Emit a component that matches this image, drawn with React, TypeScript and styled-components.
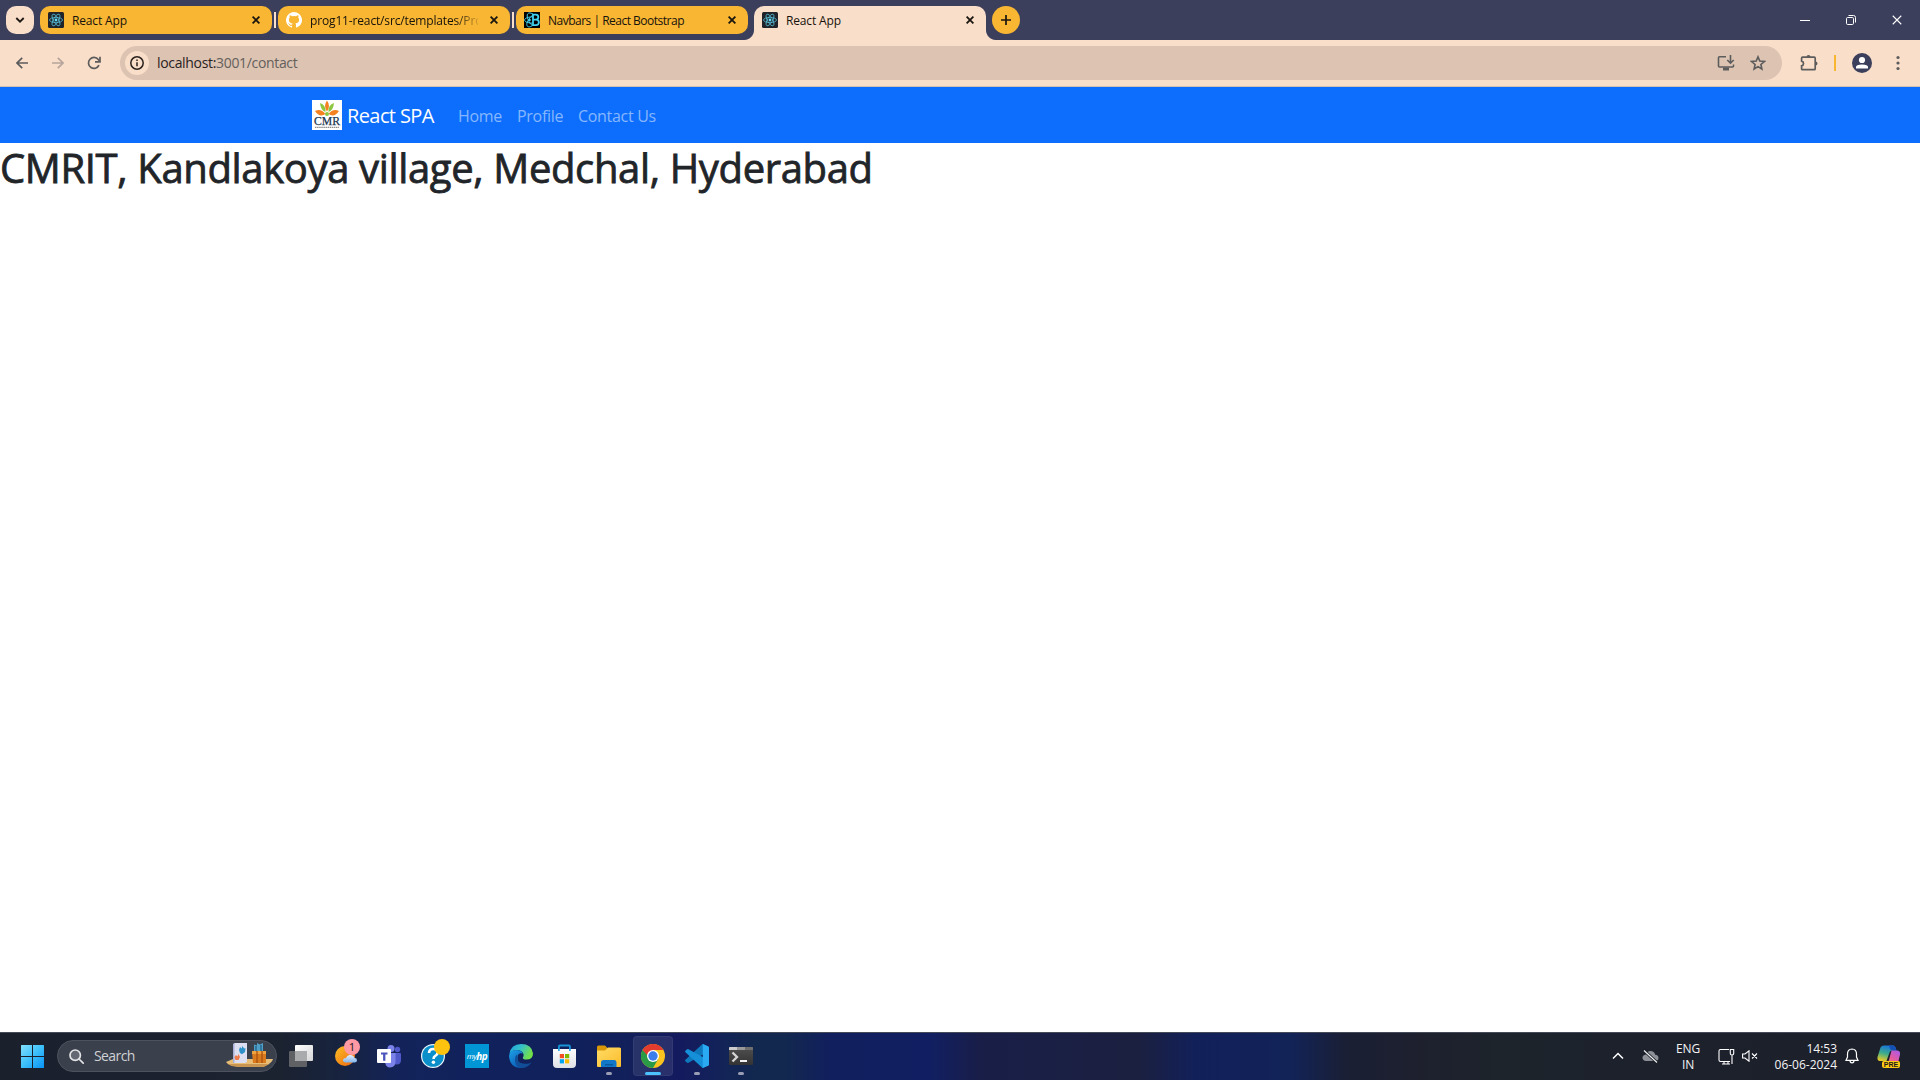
import React from "react";
import styled, { createGlobalStyle } from "styled-components";

const Global = createGlobalStyle`
  * { box-sizing: border-box; }
  body {
    margin: 0;
    background: #fff;
    font-family: "Open Sans", "Noto Sans", sans-serif;
    overflow: hidden;
  }
  svg { display: block; flex: none; }
`;

const Desktop = styled.div`
  width: 1920px;
  height: 1080px;
  display: flex;
  flex-direction: column;
  overflow: hidden;
`;

/* ---------- browser tab strip ---------- */

const TabStrip = styled.div`
  height: 40px;
  flex: none;
  display: flex;
  padding: 6px 0 0 6px;
  background: #3c3f5b;
`;

const TabSearch = styled.div`
  width: 28px;
  height: 28px;
  margin-right: 6px;
  border-radius: 10px;
  background: #f9dec9;
  display: grid;
  place-items: center;
`;

const TabBox = styled.div<{ $active?: boolean }>`
  position: relative;
  width: 232px;
  height: ${(p) => (p.$active ? 34 : 28)}px;
  padding: 0 0 ${(p) => (p.$active ? 6 : 0)}px 8px;
  display: flex;
  align-items: center;
  border-radius: ${(p) => (p.$active ? "10px 10px 0 0" : "10px")};
  background: ${(p) => (p.$active ? "#f9dec9" : "#f8b633")};
  &::before,
  &::after {
    content: "";
    display: ${(p) => (p.$active ? "block" : "none")};
    position: absolute;
    bottom: 0;
    width: 10px;
    height: 10px;
  }
  &::before {
    left: -10px;
    background: radial-gradient(circle at 0 0, transparent 9.5px, #f9dec9 10.5px);
  }
  &::after {
    right: -10px;
    background: radial-gradient(circle at 100% 0, transparent 9.5px, #f9dec9 10.5px);
  }
`;

const TabTitle = styled.div<{ $spacing?: number; $fade?: boolean }>`
  width: 168px;
  flex: none;
  margin-left: 8px;
  padding-top: 2px;
  white-space: nowrap;
  font-size: 12px;
  line-height: 18px;
  color: #16120c;
  letter-spacing: ${(p) => p.$spacing ?? 0}px;
  mask-image: ${(p) => (p.$fade ? "linear-gradient(90deg, #000 145px, transparent 172px)" : "none")};
`;

const TabGap = styled.div<{ $line?: boolean }>`
  width: 6px;
  height: 28px;
  display: grid;
  place-items: center;
  &::after {
    content: "";
    width: 2px;
    height: 16px;
    background: ${(p) => (p.$line ? "#f9dec9" : "transparent")};
  }
`;

const NewTab = styled.div`
  width: 28px;
  height: 28px;
  border-radius: 50%;
  background: #f8b633;
  display: grid;
  place-items: center;
`;

const WindowButtons = styled.div`
  margin: -6px 0 0 auto;
  height: 40px;
  display: flex;
`;

const WindowButton = styled.div`
  width: 46px;
  display: grid;
  place-items: center;
`;

/* ---------- browser toolbar ---------- */

const Toolbar = styled.div`
  height: 47px;
  flex: none;
  display: flex;
  align-items: center;
  padding: 0 4px 1px 4px;
  background: #f9dec9;
  border-bottom: 1px solid #d3bfb4;
`;

const ToolSlot = styled.div<{ $w?: number }>`
  width: ${(p) => p.$w ?? 36}px;
  height: 34px;
  flex: none;
  display: grid;
  place-items: center;
`;

const Omnibox = styled.div`
  flex: 1;
  height: 34px;
  margin: 0 9px 0 8px;
  padding: 0 8px 0 5px;
  display: flex;
  align-items: center;
  border-radius: 17px;
  background: #dcc3b2;
`;

const SiteInfo = styled.div`
  width: 24px;
  height: 24px;
  border-radius: 50%;
  background: #f9dec9;
  display: grid;
  place-items: center;
`;

const Url = styled.div`
  flex: 1;
  margin-left: 8px;
  font-size: 14px;
  line-height: 20px;
  color: #655f5c;
  letter-spacing: -0.33px;
`;

const Host = styled.span`
  color: #29221f;
`;

const Divider = styled.div`
  width: 2px;
  height: 16px;
  margin: 0 8px 0 7px;
  background: #f8b633;
`;

/* ---------- page ---------- */

const Page = styled.main`
  flex: 1;
  background: #fff;
`;

const Navbar = styled.nav`
  height: 56px;
  background: #0d6efd;
`;

const Container = styled.div`
  width: 1320px;
  height: 100%;
  margin: 0 auto;
  padding: 0 12px;
  display: flex;
  align-items: center;
`;

const Brand = styled.a`
  width: 87px;
  margin: 0 16px 0 5px;
  padding-top: 1px;
  color: #fff;
  font-size: 20px;
  line-height: 30px;
  white-space: nowrap;
  letter-spacing: -0.6px;
`;

const NavLink = styled.a<{ $w: number }>`
  width: ${(p) => p.$w}px;
  padding: 1px 8px 0;
  color: #86b7fe;
  font-size: 16px;
  line-height: 24px;
  white-space: nowrap;
  letter-spacing: -0.3px;
`;

const Heading = styled.h1`
  margin: 0;
  padding-top: 1px;
  font-size: 40px;
  font-weight: 500;
  line-height: 48px;
  color: #212529;
  white-space: nowrap;
  letter-spacing: -0.36px;
  -webkit-text-stroke: 0.8px #212529;
`;

/* ---------- taskbar ---------- */

const Taskbar = styled.footer`
  height: 48px;
  flex: none;
  display: flex;
  align-items: center;
  padding: 0 9px 1px 21px;
  border-top: 1px solid #454b59;
  background: linear-gradient(
    90deg,
    #1b202d 0, #1b2230 280px, #17233f 340px, #13235a 400px, #10215c 500px, #11205a 620px,
    #141a5e 680px, #13225a 715px, #12284e 755px, #12284e 785px, #111f5e 830px, #111f62 930px,
    #191e48 980px, #1b2040 1140px, #12205a 1195px, #122358 1290px, #1a1f35 1345px,
    #1e202e 1420px, #1d242b 1500px, #1c212c 1620px, #1b202b 1920px
  );
`;

const SearchPill = styled.div`
  width: 220px;
  height: 32px;
  margin: 0 2px 0 12px;
  padding: 0 3px 0 11px;
  display: flex;
  align-items: center;
  border-radius: 16px;
  border: 1px solid #4d525e;
  background: #3a404c;
`;

const SearchLabel = styled.div`
  flex: 1;
  margin-left: 10px;
  font-size: 14px;
  line-height: 20px;
  color: #cfd1d4;
  letter-spacing: -0.6px;
`;

const AppSlot = styled.div<{ $state?: "open" | "active" }>`
  position: relative;
  width: 40px;
  height: 40px;
  margin: 0 2px;
  display: grid;
  place-items: center;
  border-radius: 4px;
  background: ${(p) => (p.$state === "active" ? "rgba(255,255,255,0.09)" : "transparent")};
  box-shadow: ${(p) => (p.$state === "active" ? "inset 0 0 0 1px rgba(255,255,255,0.05)" : "none")};
  &::after {
    content: "";
    display: ${(p) => (p.$state ? "block" : "none")};
    position: absolute;
    bottom: 1px;
    left: ${(p) => (p.$state === "active" ? 12 : 17)}px;
    width: ${(p) => (p.$state === "active" ? 16 : 6)}px;
    height: 3px;
    border-radius: 2px;
    background: ${(p) => (p.$state === "active" ? "#4cc2ff" : "#9a9db4")};
  }
`;

const Badge = styled.div<{ $color: string; $right: number }>`
  position: absolute;
  top: 3px;
  right: ${(p) => p.$right}px;
  width: 16px;
  height: 16px;
  border-radius: 50%;
  background: ${(p) => p.$color};
  color: #1a1a1a;
  font-size: 11.5px;
  line-height: 16px;
  text-align: center;
`;

const MyHp = styled.div`
  width: 24px;
  height: 24px;
  background: #0096d6;
  color: #fff;
  display: flex;
  justify-content: center;
  align-items: center;
  font-size: 8px;
  line-height: 12px;
  font-style: italic;
  letter-spacing: -0.6px;
`;

const HpMark = styled.b`
  font-size: 10px;
`;

const Tray = styled.div`
  margin-left: auto;
  display: flex;
  align-items: center;
  height: 100%;
`;

const TraySlot = styled.div<{ $w: number }>`
  width: ${(p) => p.$w}px;
  display: flex;
  justify-content: center;
  align-items: center;
`;

const TrayText = styled.div<{ $w: number; $align: string; $spacing: number }>`
  width: ${(p) => p.$w}px;
  padding-top: 1px;
  color: #f4f4f5;
  font-size: 12px;
  line-height: 16px;
  text-align: ${(p) => p.$align};
  letter-spacing: ${(p) => p.$spacing}px;
  white-space: pre-line;
`;

const CopilotWrap = styled.div`
  position: relative;
  width: 24px;
  height: 24px;
`;

const PreTag = styled.div`
  position: absolute;
  left: 5px;
  bottom: 0;
  width: 18px;
  height: 7px;
  border-radius: 2px;
  background: #ffc915;
  color: #1b1b1b;
  font-family: "Liberation Sans", sans-serif;
  font-size: 7px;
  font-weight: 700;
  line-height: 7px;
  text-align: center;
`;

/* ---------- drawings ---------- */

const CloseX = ({ size = 8, color = "#1a150e", w = 1.8 }: { size?: number; color?: string; w?: number }) => (
  <svg width={size} height={size} viewBox="0 0 8 8" stroke={color} strokeWidth={w} fill="none">
    <path d="M.6.6l6.8 6.8M7.4.6L.6 7.4" />
  </svg>
);

const ReactIcon = () => (
  <svg width="16" height="16" viewBox="0 0 16 16">
    <rect width="16" height="16" rx="1.5" fill="#20232a" />
    <g fill="none" stroke="#53b9d2" strokeWidth=".8">
      <ellipse cx="8" cy="8" rx="6.5" ry="2.6" />
      <ellipse cx="8" cy="8" rx="6.5" ry="2.6" transform="rotate(60 8 8)" />
      <ellipse cx="8" cy="8" rx="6.5" ry="2.6" transform="rotate(120 8 8)" />
    </g>
    <circle cx="8" cy="8" r="1.4" fill="#61dafb" />
  </svg>
);

const GithubIcon = () => (
  <svg width="16" height="16" viewBox="0 0 16 16" fill="#fff">
    <path d="M8 0a8 8 0 00-2.53 15.59c.4.07.55-.17.55-.38v-1.34c-2.23.48-2.7-1.07-2.7-1.07-.36-.93-.89-1.17-.89-1.17-.73-.5.05-.49.05-.49.8.06 1.23.83 1.23.83.72 1.22 1.88.87 2.34.66.07-.52.28-.87.5-1.07-1.77-.2-3.64-.89-3.64-3.95 0-.87.31-1.59.83-2.15-.08-.2-.36-1.01.07-2.12 0 0 .68-.21 2.2.82a7.6 7.6 0 014 0c1.53-1.04 2.2-.82 2.2-.82.44 1.1.16 1.92.08 2.12.51.56.82 1.27.82 2.15 0 3.07-1.87 3.75-3.65 3.95.29.25.54.73.54 1.48v2.17c0 .21.15.46.55.38A8 8 0 008 0z" />
  </svg>
);

const BootstrapIcon = () => (
  <svg width="16" height="16" viewBox="0 0 16 16">
    <rect width="16" height="16" fill="#000" />
    <g fill="none" stroke="#41d0ee" strokeWidth="1">
      <path d="M9 2.600h2.800a2.400 2.400 0 010 5H9zM9 7.600h3.100a2.700 2.700 0 010 5.500H9z" strokeWidth="1.800" />
      <path d="M9 4.800C5 4.800.6 6 .6 8s3.400 3 8 3.200" />
      <path d="M9 2.200C6.500.2 3 .4 3.200 4S6 12.500 9 14" />
      <path d="M9 3C6.500 4.500 2.600 9.500 2.800 12.500S6 15.800 9 13" />
    </g>
    <circle cx="5.600" cy="8" r="1.200" fill="#41d0ee" />
  </svg>
);

const CmrLogo = () => (
  <svg width="30" height="30" viewBox="0 0 30 30">
    <rect width="30" height="30" fill="#fff" />
    <path d="M15 .5q4 5.500 0 11q-4-5.500 0-11z" fill="#f58220" />
    <path d="M8 3q6 2 5.500 9q-5-2-5.500-9zM22 3q-6 2-5.500 9q5-2 5.500-9z" fill="#8dc63f" />
    <path d="M3 11q6-3 10.500 3q-6 4-10.500-3zM27 11q-6-3-10.500 3q6 4 10.500-3z" fill="#f58220" />
    <circle cx="15" cy="14" r="2" fill="#8dc63f" />
    <text x="15" y="25" textAnchor="middle" fontFamily="Liberation Serif, serif" fontSize="12.500" textLength="26" lengthAdjust="spacingAndGlyphs" fill="#1c3550" stroke="#1c3550" strokeWidth=".25">CMR</text>
    <path d="M3 27.300h24" stroke="#8b8b8b" strokeWidth="1.200" strokeDasharray="1.500 .6" />
  </svg>
);

const SearchArt = () => (
  <svg width="47" height="26" viewBox="0 0 47 26">
    <path d="M0 19l7-3h40q-1 4-8 7H9q-6 0-9-4z" fill="#e8bd78" />
    <path d="M2 21q4 3 9 3h27l5-3z" fill="#c99652" />
    <path d="M7 1l2-1h12v19l-2 1H7z" fill="#dcdff2" />
    <path d="M7 1h1.500v19H7z" fill="#aab0d8" />
    <path d="M13 7l1-3 1.500 1.500 1-2.500 1.500 2.500 1.500-.5-.5 4-3 2.200-2-1.200z" fill="#2f91c9" />
    <path d="M8.500 14l1.500-2 1.500 1.500 1-2.500 1.500 3-1.500 3h-3z" fill="#ef7b4b" />
    <path d="M28 8V1.500l3 1V0l3 1.500L37 0v8z" fill="#4f9fc8" />
    <path d="M30 3v5M35 2v6" stroke="#28698e" strokeWidth="1.500" />
    <path d="M26 9h14v11H27z" fill="#d97a1d" />
    <path d="M26 8h14v3H26z" fill="#efa23e" />
    <path d="M31 8v12M36 8v12" stroke="#a8500f" strokeWidth="1.300" />
  </svg>
);

const TaskView = () => (
  <svg width="24" height="24" viewBox="0 0 24 24">
    <defs><linearGradient id="tv" x1="0" y1="0" x2="1" y2="1"><stop stopColor="#fff" /><stop offset="1" stopColor="#d6d6d6" /></linearGradient></defs>
    <rect y="7" width="18" height="16" rx="1" fill="#5f6164" />
    <rect x="6" y="1" width="18" height="16" rx="1" fill="url(#tv)" />
    <path d="M6 7h12v10H7a1 1 0 01-1-1z" fill="#a9abad" />
  </svg>
);

const Weather = () => (
  <svg width="24" height="24" viewBox="0 0 24 24">
    <defs>
      <linearGradient id="sun" x1="0" y1="0" x2="1" y2="1"><stop stopColor="#fbbf24" /><stop offset="1" stopColor="#ee6612" /></linearGradient>
      <linearGradient id="cl" x1="0" y1="0" x2="0" y2="1"><stop stopColor="#e5f0fd" /><stop offset="1" stopColor="#83b4ec" /></linearGradient>
    </defs>
    <circle cx="12" cy="12" r="10" fill="url(#sun)" />
    <path d="M12.500 18.500q-3-.5-2.500-2.700Q10.500 14 13 14q1.500-3.500 5-3 3 .5 3.500 3 2.500 0 2.500 2.300 0 2.200-2.500 2.200z" fill="url(#cl)" />
  </svg>
);

const Teams = () => (
  <svg width="24" height="24" viewBox="0 0 24 24">
    <circle cx="20.500" cy="5.500" r="2.700" fill="#5059c9" />
    <path d="M16 9h7a1 1 0 011 1v6q0 4.500-4.500 4.500T16 17z" fill="#5059c9" />
    <circle cx="14" cy="4.500" r="3.500" fill="#7b83eb" />
    <path d="M8 9h10.500v8q0 6.500-5.500 6.500-4 0-5-5z" fill="#7b83eb" />
    <rect y="5" width="14" height="14" rx="1" fill="#fff" />
    <path d="M4 8.500h6.500v2h-2.100v6.300H6.100v-6.300H4z" fill="#4b53bc" />
  </svg>
);

const HelpIcon = () => (
  <svg width="24" height="24" viewBox="0 0 24 24">
    <circle cx="12" cy="12" r="12" fill="#e9f5fb" />
    <circle cx="12" cy="12" r="10.800" fill="#0b8fca" />
    <path d="M8 9q.2-4 4.200-4 4.300 0 4.300 3.700 0 2-2.200 3.200-1.800 1-1.800 3" fill="none" stroke="#fff" strokeWidth="2.600" />
    <circle cx="12.400" cy="18.200" r="1.700" fill="#fff" />
  </svg>
);

const Edge = () => (
  <svg width="24" height="24" viewBox="0 0 24 24">
    <defs>
      <linearGradient id="e1" x1="0" y1="0" x2="1" y2=".4"><stop stopColor="#1d9fe0" /><stop offset=".5" stopColor="#35c1c8" /><stop offset="1" stopColor="#72e04a" /></linearGradient>
      <linearGradient id="e2" x1="0" y1="0" x2=".6" y2="1"><stop stopColor="#1da1e8" /><stop offset="1" stopColor="#0b5cb5" /></linearGradient>
    </defs>
    <path d="M.4 10Q2 0 12 0q11 0 12 9.500 0 6-6.500 6-4 0-3.600-2 1-1.500.6-3.500Q13 6 7.500 6 3 6 .4 10z" fill="url(#e1)" />
    <path d="M0 12Q.5 6 7 6q5.500 0 7 3.500-5-1.500-5.500 3.500-.3 6 5 9.500L12 24Q1 24 0 12z" fill="url(#e2)" />
    <path d="M8.500 10.300Q6 20 17 19.700q3 0 5.500-1.500Q19 24 12.500 24 7 23 6 17q-.5-5 2.500-6.700z" fill="#124e98" />
  </svg>
);

const Store = () => (
  <svg width="24" height="24" viewBox="0 0 24 24">
    <defs><linearGradient id="st" x1="0" y1="0" x2="0" y2="1"><stop stopColor="#fdfdfe" /><stop offset="1" stopColor="#dfe1e5" /></linearGradient></defs>
    <path d="M5.900 7V2.500q0-1 1-1h9q1 0 1 1V7" fill="none" stroke="#1793d8" strokeWidth="1.800" />
    <path d="M0 5h23v15q0 4-4 4H4q-4 0-4-4z" fill="url(#st)" />
    <path d="M5 5v2h1.800V5zM16 5v2h1.800V5z" fill="#30abea" />
    <path d="M6.800 10H11v4.200H6.800z" fill="#f25022" /><path d="M12 10h4.200v4.200H12z" fill="#7fba00" />
    <path d="M6.800 15.200H11v4.200H6.800z" fill="#00a4ef" /><path d="M12 15.200h4.200v4.200H12z" fill="#ffb900" />
  </svg>
);

const Explorer = () => (
  <svg width="24" height="24" viewBox="0 0 24 24">
    <defs><linearGradient id="fo" x1="0" y1="0" x2="1" y2="1"><stop stopColor="#ffdc66" /><stop offset="1" stopColor="#fcbc2b" /></linearGradient></defs>
    <path d="M0 3q0-1.500 1.500-1.500H8l2.500 2.500H22.500Q24 4 24 5v5H0z" fill="#d99708" />
    <path d="M0 6.500h8L11 3.500h11.500Q24 3.500 24 5V22q0 1-1 1H1q-1 0-1-1z" fill="url(#fo)" />
    <path d="M4 23v-4.500Q4 16 6.500 16h11q2 0 2 2.500V23z" fill="#1277c9" />
    <path d="M8 20h8v1.500H8z" fill="#0a5aa0" />
  </svg>
);

const Chrome = () => (
  <svg width="24" height="24" viewBox="0 0 24 24">
    <circle cx="12" cy="12" r="12" fill="#fcc31e" />
    <path d="M12 12L1.600 6A12 12 0 0012 24l5.200-9z" fill="#2a9a47" />
    <path d="M12 12H6.800L1.600 6A12 12 0 0122.400 6H12z" fill="#e33b2e" />
    <circle cx="12" cy="12" r="6" fill="#fff" />
    <circle cx="12" cy="12" r="4.700" fill="#3b7ded" />
  </svg>
);

const VsCode = () => (
  <svg width="24" height="24" viewBox="0 0 24 24">
    <path d="M17.500 0L24 3v4L3.500 18.800q-1 .5-1.700-.2L.4 17.300q-.7-.8 0-1.500z" fill="#0e78bd" />
    <path d="M17.500 24l6.500-3v-4.500L3.500 5.200q-1-.5-1.700.2L.4 6.700q-.7.8 0 1.500z" fill="#1590d8" />
    <path d="M17.800 0L23 2.300q1 .5 1 1.500v16.400q0 1-1 1.500L17.800 24z" fill="#2aaaf2" />
  </svg>
);

const Terminal = () => (
  <svg width="24" height="24" viewBox="0 0 24 24">
    <defs><linearGradient id="te" x1="0" y1="0" x2="0" y2="1"><stop stopColor="#505050" /><stop offset="1" stopColor="#333" /></linearGradient></defs>
    <rect y="3" width="24" height="18" rx="1" fill="url(#te)" />
    <path d="M1 3h7v3H0V4q0-1 1-1z" fill="#ccc" /><path d="M8 3h8v3H8z" fill="#999" /><path d="M16 3h7q1 0 1 1v2h-8z" fill="#6f6f6f" />
    <path d="M3.500 8.500L8 13l-4.500 4.500" fill="none" stroke="#d5d5d5" strokeWidth="2.300" />
    <path d="M11 16h7v2h-7z" fill="#f1f1f1" />
  </svg>
);

const Copilot = () => (
  <svg width="24" height="24" viewBox="0 0 24 24">
    <defs>
      <linearGradient id="c1" x1=".5" y1="0" x2=".2" y2="1"><stop stopColor="#1976dc" /><stop offset=".5" stopColor="#3cab8b" /><stop offset="1" stopColor="#f2cc20" /></linearGradient>
      <linearGradient id="c2" x1="1" y1="0" x2=".2" y2="1"><stop stopColor="#a659ee" /><stop offset=".6" stopColor="#e55aa0" /><stop offset="1" stopColor="#f78654" /></linearGradient>
    </defs>
    <path d="M7 1.500h9q2 0 2.500 2L19.500 6.500H15q-2 0-2.500 2L9.500 17H3q-3 0-2.500-4L3.500 3.500Q4.500 1.500 7 1.500z" fill="url(#c1)" />
    <path d="M12 1.500h4q2 0 2.500 2l1 3H15q-2-.3-3-5z" fill="#1651b6" />
    <path d="M14.500 6.500H20q3.500.2 3 4l-2 8.500q-.5 1-3.500 1H8q3-.5 4-4z" fill="url(#c2)" />
  </svg>
);

const tabs = [
  { title: "React App", icon: <ReactIcon />, spacing: -0.15 },
  { title: "prog11-react/src/templates/Pro", icon: <GithubIcon />, spacing: -0.15, fade: true },
  { title: "Navbars | React Bootstrap", icon: <BootstrapIcon />, spacing: -0.5 },
  { title: "React App", icon: <ReactIcon />, spacing: -0.15, active: true },
];

const apps: { icon: React.ReactNode; state?: "open" | "active"; badge?: string; right?: number; label?: string }[] = [
  { icon: <TaskView /> },
  { icon: <Weather />, badge: "#ff99a4", right: 5, label: "1" },
  { icon: <Teams /> },
  { icon: <HelpIcon />, badge: "#ffc20e", right: 3 },
  { icon: <MyHp>my<HpMark>hp</HpMark></MyHp> },
  { icon: <Edge /> },
  { icon: <Store /> },
  { icon: <Explorer />, state: "open" },
  { icon: <Chrome />, state: "active" },
  { icon: <VsCode />, state: "open" },
  { icon: <Terminal />, state: "open" },
];

export default function App() {
  return (
    <Desktop>
      <Global />
      <TabStrip>
        <TabSearch>
          <svg width="10" height="6" viewBox="0 0 10 6" fill="none" stroke="#201a17" strokeWidth="1.900"><path d="M1.300 1L5 4.600 8.700 1" /></svg>
        </TabSearch>
        {tabs.map((t, i) => (
          <React.Fragment key={i}>
            <TabBox $active={t.active}>
              {t.icon}
              <TabTitle $spacing={t.spacing} $fade={t.fade}>{t.title}</TabTitle>
              <ToolSlot $w={32}><CloseX /></ToolSlot>
            </TabBox>
            <TabGap $line={i < 2} />
          </React.Fragment>
        ))}
        <NewTab>
          <svg width="10" height="10" viewBox="0 0 10 10" stroke="#1a150e" strokeWidth="1.700"><path d="M5 0v10M0 5h10" /></svg>
        </NewTab>
        <WindowButtons>
          <WindowButton><svg width="10" height="10" viewBox="0 0 10 10" stroke="#fff"><path d="M0 5.500h10" /></svg></WindowButton>
          <WindowButton>
            <svg width="10" height="10" viewBox="0 0 10 10" fill="none" stroke="#fff"><rect x=".5" y="2.500" width="7" height="7" rx="1.200" /><path d="M2.500.5H7.500q2 0 2 2V7.500" /></svg>
          </WindowButton>
          <WindowButton><CloseX size={10} color="#fff" w={0.85} /></WindowButton>
        </WindowButtons>
      </TabStrip>

      <Toolbar>
        <ToolSlot>
          <svg width="12" height="12" viewBox="0 0 12 12" fill="none" stroke="#5d5c5d" strokeWidth="1.700"><path d="M12 6H1.300M6.200.8L1 6l5.200 5.200" /></svg>
        </ToolSlot>
        <ToolSlot>
          <svg width="12" height="12" viewBox="0 0 12 12" fill="none" stroke="#b5a59b" strokeWidth="1.700"><path d="M0 6h10.700M5.800.8L11 6l-5.200 5.200" /></svg>
        </ToolSlot>
        <ToolSlot>
          <svg width="14" height="14" viewBox="0 0 14 14" fill="none" stroke="#5d5c5d" strokeWidth="1.700"><path d="M12 9.200A5.500 5.500 0 1111.300 3.500L12.500 5" /><path d="M13 .8v5H8" /></svg>
        </ToolSlot>
        <Omnibox>
          <SiteInfo>
            <svg width="14" height="14" viewBox="0 0 14 14" fill="none" stroke="#29221f" strokeWidth="1.500"><circle cx="7" cy="7" r="6.200" /><path d="M7 6.300v4M7 3.600v1.500" /></svg>
          </SiteInfo>
          <Url><Host>localhost:</Host>3001/contact</Url>
          <ToolSlot $w={32}>
            <svg width="18" height="16" viewBox="0 0 18 16" fill="none" stroke="#5d5c5d" strokeWidth="1.600"><path d="M9 1.800H2.500q-1 0-1 1V11q0 1 1 1h13q1 0 1-1V9.500" /><path d="M13.500 0v7.500M10.300 5l3.200 3.200L16.700 5" /><path d="M6 14h6" strokeWidth="3" /></svg>
          </ToolSlot>
          <ToolSlot $w={32}>
            <svg width="16" height="16" viewBox="0 0 16 16" fill="none" stroke="#5d5c5d" strokeWidth="1.600"><path d="M8 1.900l1.800 4.200 4.600.4-3.500 3 1 4.500L8 11.600l-3.900 2.400 1-4.500-3.500-3 4.600-.4z" /></svg>
          </ToolSlot>
        </Omnibox>
        <ToolSlot>
          <svg width="18" height="18" viewBox="0 0 18 18"><path d="M2.500 3.200h11.700q1 0 1 1v10.500q0 1-1 1H2.500q-.9 0-.9-1v-2.900a2.400 2.400 0 000-4.700V4.200q0-1 .9-1z" fill="none" stroke="#5d5c5d" strokeWidth="1.700" /><path d="M6.500 3a2 2 0 014 0zM15.500 7.500a2 2 0 010 4z" fill="#5d5c5d" /></svg>
        </ToolSlot>
        <Divider />
        <ToolSlot>
          <svg width="20" height="20" viewBox="0 0 20 20"><circle cx="10" cy="10" r="10" fill="#3c3f5b" /><circle cx="10" cy="7" r="3.100" fill="#fff" /><path d="M4 15.500v-1.400q0-2.600 6-2.600t6 2.600v1.400z" fill="#fff" /></svg>
        </ToolSlot>
        <ToolSlot>
          <svg width="4" height="16" viewBox="0 0 4 16" fill="#5d5c5d"><circle cx="2" cy="2.500" r="1.600" /><circle cx="2" cy="8" r="1.600" /><circle cx="2" cy="13.500" r="1.600" /></svg>
        </ToolSlot>
      </Toolbar>

      <Page>
        <Navbar>
          <Container>
            <CmrLogo />
            <Brand>React SPA</Brand>
            <NavLink $w={59}>Home</NavLink>
            <NavLink $w={61}>Profile</NavLink>
            <NavLink $w={94}>Contact Us</NavLink>
          </Container>
        </Navbar>
        <Heading>CMRIT, Kandlakoya village, Medchal, Hyderabad</Heading>
      </Page>

      <Taskbar>
        <svg width="24" height="24" viewBox="0 0 24 24">
          <defs><linearGradient id="win" gradientUnits="userSpaceOnUse" x1="0" y1="0" x2="23" y2="23"><stop stopColor="#85e0fd" /><stop offset=".5" stopColor="#3fc2fb" /><stop offset="1" stopColor="#0a94f5" /></linearGradient></defs>
          <path d="M0 1.600q0-.6.6-.6H11v11H0zM12 1h10.400q.6 0 .6.600V12H12zM0 13h11v11H.6q-.6 0-.6-.6zM12 13h11v10.400q0 .6-.6.600H12z" fill="url(#win)" />
        </svg>
        <SearchPill>
          <svg width="15" height="15" viewBox="0 0 15 15" fill="#646872" stroke="#e2e3e5" strokeWidth="1.700"><circle cx="6.200" cy="6.200" r="5.200" /><path d="M10 10l4.200 4.200" strokeLinecap="round" /></svg>
          <SearchLabel>Search</SearchLabel>
          <SearchArt />
        </SearchPill>
        {apps.map((a, i) => (
          <AppSlot key={i} $state={a.state}>
            {a.icon}
            {a.badge && <Badge $color={a.badge} $right={a.right ?? 4}>{a.label}</Badge>}
          </AppSlot>
        ))}
        <Tray>
          <TraySlot $w={32}><svg width="12" height="8" viewBox="0 0 12 8" fill="none" stroke="#fff" strokeWidth="1.500"><path d="M1 6.500l5-5 5 5" /></svg></TraySlot>
          <TraySlot $w={32}>
            <svg width="17" height="16" viewBox="0 0 17 16"><path d="M4 13q-3.500-.3-3.500-3.300Q.5 7 3.500 6.700 5 3 8.500 3q3.700 0 4.700 3.700 3.300.3 3.300 3.200 0 3-3.500 3.100z" fill="#8d9096" /><path d="M2 2.500l13 12" stroke="#1b202b" strokeWidth="3" /><path d="M2 2.500l13 12" stroke="#eee" strokeWidth="1.200" /></svg>
          </TraySlot>
          <TrayText $w={44} $align="center" $spacing={-0.1}>{"ENG\nIN"}</TrayText>
          <TraySlot $w={32}>
            <svg width="17" height="17" viewBox="0 0 17 17" fill="none" stroke="#fff" strokeWidth="1.100"><path d="M11 1.500H2.500q-1.500 0-1.500 1.500v9q0 1.500 1.500 1.500H12M4 16h8M6 13.500V16M10 13.500V16M12.300 1.500h3.400v4q0 1.500-1.700 1.500t-1.700-1.500zM14 7v9" /></svg>
          </TraySlot>
          <TraySlot $w={16}>
            <svg width="16" height="12" viewBox="0 0 16 12" fill="none" stroke="#fff" strokeWidth="1.100"><path d="M.6 4H3l4-3.200v10.400L3 8H.6zM10 3.500l5 5M15 3.500l-5 5" /></svg>
          </TraySlot>
          <TrayText $w={79} $align="right" $spacing={-0.02}>{"14:53\n06-06-2024"}</TrayText>
          <TraySlot $w={30}>
            <svg width="14" height="16" viewBox="0 0 14 16" fill="none" stroke="#fff" strokeWidth="1.200"><path d="M7 1Q2.500 1.200 2.500 6v3L1 12.300h12L11.500 9V6Q11.500 1.200 7 1zM5 12.500q0 2.300 2 2.300t2-2.300" /></svg>
          </TraySlot>
          <TraySlot $w={44}><CopilotWrap><Copilot /><PreTag>PRE</PreTag></CopilotWrap></TraySlot>
        </Tray>
      </Taskbar>
    </Desktop>
  );
}
